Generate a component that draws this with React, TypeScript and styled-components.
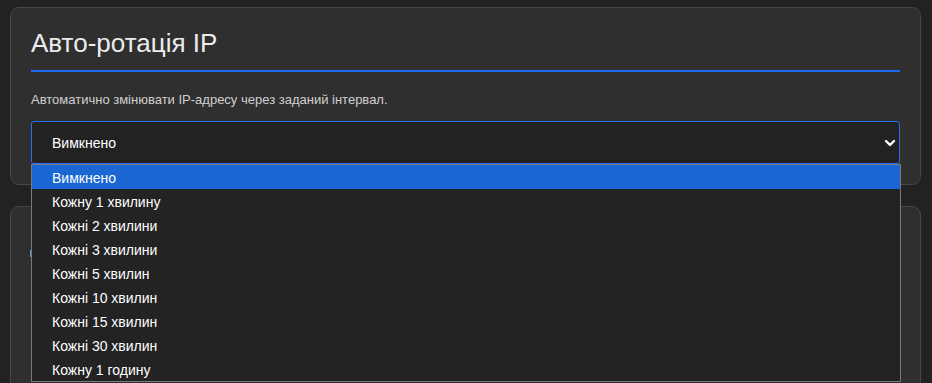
import React from "react";
import styled, { createGlobalStyle } from "styled-components";

const Global = createGlobalStyle`
  html, body { margin: 0; padding: 0; background: #222222; }
  body { font-family: "Liberation Sans", Arial, sans-serif; color: #e6e6e6; }
  #root { height: 383px; overflow: hidden; }
`;

const Page = styled.div`
  display: flex;
  flex-direction: column;
  gap: 21px;
  padding: 7px 11px 0 10px;
  width: 932px;
  box-sizing: border-box;
`;

const Card = styled.section<{ $tall?: boolean }>`
  position: relative;
  background: #2f2f2f;
  border: 1px solid #464646;
  border-radius: 9px;
  padding: 20px 20px 20px 20px;
  box-sizing: border-box;
  min-height: ${(p) => (p.$tall ? "200px" : "auto")};
`;

const Title = styled.h2`
  margin: 0;
  font-size: 26px;
  font-weight: 400;
  line-height: 31px;
  color: #ececec;
  padding-bottom: 11px;
  border-bottom: 2px solid #1d6af0;
`;

const Desc = styled.p`
  margin: 20px 0 14px;
  font-size: 13px;
  line-height: 15px;
  color: #cfcfcf;
`;

const SelectWrap = styled.div`
  position: relative;
`;

const SelectBox = styled.div`
  height: 43px;
  box-sizing: border-box;
  border: 1px solid #2a6ef5;
  border-radius: 3px;
  background: #222222;
  display: flex;
  align-items: center;
  justify-content: space-between;
  padding: 0 3px 0 20px;
  font-size: 14px;
  color: #ffffff;
`;

const Chevron = styled.svg`
  width: 12px;
  height: 10px;
  display: block;
`;

const Dropdown = styled.ul`
  position: absolute;
  left: 0;
  top: 43px;
  width: 868px;
  margin: 0;
  padding: 0;
  list-style: none;
  background: #232323;
  border: 1px solid #7a7a7a;
  z-index: 10;
`;

const Option = styled.li<{ $active?: boolean }>`
  height: 24px;
  box-sizing: border-box;
  display: flex;
  align-items: center;
  padding: 2px 0 0 20px;
  font-size: 14px;
  color: #ffffff;
  background: ${(p) => (p.$active ? "#1a66d2" : "transparent")};
`;

const Mark = styled.div`
  margin: 23px 0 0 -1px;
  width: 6px;
  height: 7px;
  background: #5b9bd5;
`;

const options = [
  "Вимкнено",
  "Кожну 1 хвилину",
  "Кожні 2 хвилини",
  "Кожні 3 хвилини",
  "Кожні 5 хвилин",
  "Кожні 10 хвилин",
  "Кожні 15 хвилин",
  "Кожні 30 хвилин",
  "Кожну 1 годину",
];

export default function App() {
  return (
    <>
      <Global />
      <Page>
        <Card>
          <Title>Авто-ротація IP</Title>
          <Desc>Автоматично змінювати IP-адресу через заданий інтервал.</Desc>
          <SelectWrap>
            <SelectBox>
              <span>Вимкнено</span>
              <Chevron viewBox="0 0 12 10">
                <polyline
                  points="2,3 6,7 10,3"
                  fill="none"
                  stroke="#ffffff"
                  strokeWidth="2.4"
                  strokeLinecap="round"
                  strokeLinejoin="round"
                />
              </Chevron>
            </SelectBox>
            <Dropdown>
              {options.map((o, i) => (
                <Option key={o} $active={i === 0}>
                  {o}
                </Option>
              ))}
            </Dropdown>
          </SelectWrap>
        </Card>
        <Card $tall>
          <Mark />
        </Card>
      </Page>
    </>
  );
}
